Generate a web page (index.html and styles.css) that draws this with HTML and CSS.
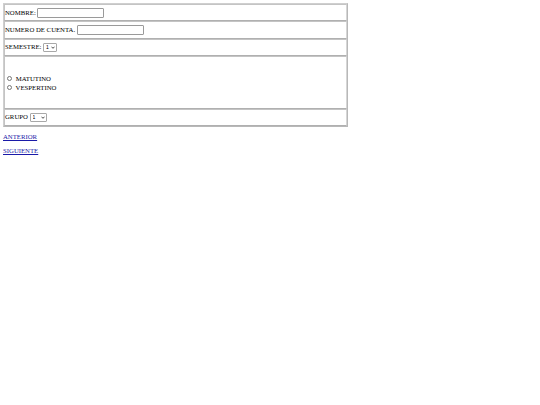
FILE: index.html
```html
<!DOCTYPE html>
<html>
<head>
<meta charset="utf-8">
<link rel="stylesheet" href="styles.css">
</head>
<body>
<table class="form">
  <tr><td class="row first">NOMBRE: <input class="text" type="text"></td></tr>
  <tr><td class="row">NUMERO DE CUENTA. <input class="text" type="text"></td></tr>
  <tr><td class="row short">SEMESTRE: <span class="pickwrap"><select class="pick"><option>1</option></select><svg class="chev" viewBox="0 0 6 4" width="4" height="3"><path d="M0.7 0.8 L3 3.2 L5.3 0.8" fill="none" stroke="#222" stroke-width="1.2"/></svg></span></td></tr>
  <tr><td class="row tall">
    <label class="opt"><input class="radio" type="radio" name="turno"> MATUTINO</label>
    <label class="opt"><input class="radio" type="radio" name="turno"> VESPERTINO</label>
  </td></tr>
  <tr><td class="row short">GRUPO <span class="pickwrap"><select class="pick wide"><option>1</option></select><svg class="chev" viewBox="0 0 6 4" width="4" height="3"><path d="M0.7 0.8 L3 3.2 L5.3 0.8" fill="none" stroke="#222" stroke-width="1.2"/></svg></span></td></tr>
</table>
<p class="nav"><a href="#">ANTERIOR</a></p>
<p class="nav"><a href="#">SIGUIENTE</a></p>
</body>
</html>
```
FILE: styles.css
```css
html, body {
  margin: 0;
  background: #fff;
}
body {
  margin: 3px;
  font-family: "Liberation Serif", "Times New Roman", serif;
  font-size: 6.75px;
  color: #000;
}
.form {
  width: 345px;
  border-collapse: separate;
  border-spacing: 0;
  border: 1px solid;
  border-color: #cfcfcf #b8b8b8 #b8b8b8 #cfcfcf;
}
.row {
  box-sizing: border-box;
  border: 1px solid;
  border-color: #c4c4c4 #d6d6d6 #b0b0b0 #c4c4c4;
  padding: 0 1px 0 0;
  height: 18px;
  vertical-align: middle;
  white-space: nowrap;
}
.row.first { height: 17px; }
.row.short { height: 17px; }
.row.tall { height: 53px; }
.text {
  box-sizing: border-box;
  width: 67px;
  height: 10px;
  border: 1px solid #9a9a9a;
  border-radius: 1px;
  padding: 0;
  margin: 0;
  vertical-align: middle;
  font-size: 6px;
  background: #fff;
}
.pickwrap {
  position: relative;
  display: inline-block;
  vertical-align: middle;
  line-height: 0;
}
.pick {
  -webkit-appearance: none;
  appearance: none;
  box-sizing: border-box;
  width: 14px;
  height: 9px;
  font-family: "Liberation Sans", Arial, sans-serif;
  font-size: 5px;
  line-height: 7px;
  padding: 0 0 0 2px;
  margin: 0;
  border: 1px solid #a8a8a8;
  border-radius: 1px;
  background: #fff;
  color: #000;
}
.pick.wide { width: 17px; }
.chev {
  position: absolute;
  right: 2px;
  top: 3px;
}
.opt {
  display: block;
  line-height: 9px;
  padding-left: 1px;
}
.radio {
  width: 5px;
  height: 5px;
  margin: 0 2px 0 1px;
  vertical-align: middle;
}
.nav {
  margin: 6px 0;
  line-height: 8px;
}
.nav a {
  color: #1a1aa8;
}
```
